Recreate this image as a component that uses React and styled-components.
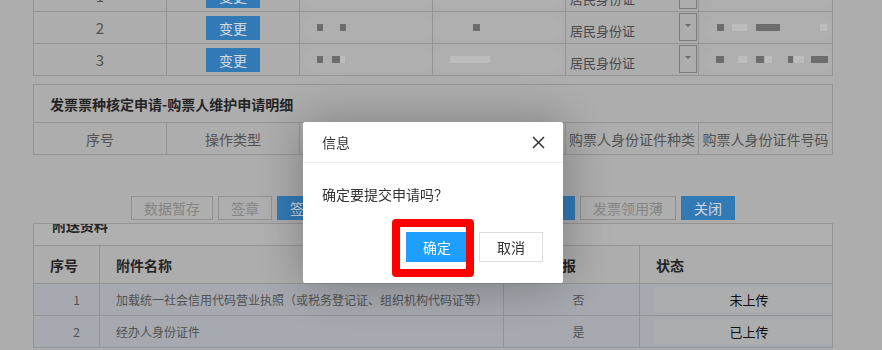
import React from "react";
import styled, { createGlobalStyle } from "styled-components";

const LINE = "#a9a9a9";
const BLUE = "#3a8bd0";
const TEXT = "#5e5e5e";

const GlobalStyle = createGlobalStyle`
  html, body {
    margin: 0;
    padding: 0;
  }
  body {
    background: #c5c5c5;
    font-family: "Noto Sans CJK SC", "Microsoft YaHei", sans-serif;
    overflow: hidden;
  }
`;

const Page = styled.div`
  width: 800px;
  height: 350px;
  margin-left: 33px;
  overflow: hidden;
`;

/* ---------- top table (scrolled) ---------- */
const TopTable = styled.div`
  margin-top: -20px;
  display: grid;
  grid-template-columns: repeat(6, 1fr);
  border-left: 1px solid ${LINE};
  border-right: 1px solid ${LINE};
`;

const Cell = styled.div`
  height: 32px;
  box-sizing: border-box;
  border-bottom: 1px solid ${LINE};
  border-right: ${(p) => (p.$last ? "none" : `1px solid ${LINE}`)};
  display: flex;
  align-items: center;
  justify-content: ${(p) => (p.$center ? "center" : "flex-start")};
  color: ${TEXT};
  font-size: 15px;
  overflow: hidden;
`;

const EditButton = styled.button`
  width: 54px;
  height: 24px;
  border: none;
  padding: 0;
  background: ${BLUE};
  color: #f2f6fb;
  font-family: inherit;
  font-size: 14px;
`;

const Blob = styled.div`
  flex: 1;
  height: 24px;
  margin: 0 ${(p) => p.$mr || 0}px 0 ${(p) => p.$ml || 0}px;
  border-radius: 12px;
  background: #c8c8c8;
  display: flex;
  align-items: center;
`;

const Mark = styled.span`
  flex: none;
  width: ${(p) => p.$w}px;
  height: 7px;
  margin-left: ${(p) => p.$gap}px;
  background: ${(p) => (p.$dark ? "#7d7d7d" : "#d8d8d8")};
`;

const SelectBox = styled.div`
  flex: 1;
  align-self: stretch;
  display: flex;
  align-items: stretch;
  padding: 1px 1px 2px 4px;
`;

const SelectText = styled.span`
  flex: 1;
  padding-top: 8px;
  font-size: 13px;
  color: #545454;
`;

const ArrowBox = styled.span`
  width: 16px;
  border: 1px solid #8e8e8e;
  display: flex;
  align-items: center;
  justify-content: center;
  &::after {
    content: "";
    border-left: 3px solid transparent;
    border-right: 3px solid transparent;
    border-top: 3px solid #7a7a7a;
    margin-top: -4px;
  }
`;

const topRows = [
  { no: 1, a: [], b: [], c: [] },
  {
    no: 2,
    a: [
      [14, 6, 1],
      [17, 6, 1],
    ],
    b: [[40, 7, 1]],
    c: [
      [10, 7, 1],
      [8, 15, 0],
      [9, 24, 1],
      [40, 7, 0],
    ],
  },
  {
    no: 3,
    a: [
      [14, 6, 1],
      [9, 8, 1],
      [0, 5, 0],
    ],
    b: [[17, 40, 0]],
    c: [
      [9, 8, 1],
      [14, 9, 0],
      [9, 8, 1],
      [1, 7, 0],
      [16, 5, 1],
      [1, 10, 0],
      [7, 17, 1],
    ],
  },
];

function Redacted({ marks, ml, mr }) {
  return (
    <Blob $ml={ml} $mr={mr}>
      {marks.map(([gap, w, dark], i) => (
        <Mark key={i} $gap={gap} $w={w} $dark={dark} />
      ))}
    </Blob>
  );
}

/* ---------- detail section ---------- */
const Section = styled.div`
  margin-top: 8px;
  border: 1px solid ${LINE};
  border-bottom: none;
`;

const SectionTitle = styled.div`
  height: 37px;
  border-bottom: 1px solid ${LINE};
  display: flex;
  align-items: center;
  padding-left: 16px;
  font-size: 14px;
  font-weight: bold;
  color: #2b2b2b;
`;

const HeadRow = styled.div`
  display: grid;
  grid-template-columns: repeat(6, 1fr);
`;

const HeadCell = styled(Cell)`
  font-size: 14px;
  color: ${TEXT};
`;

/* ---------- button bar ---------- */
const ButtonBar = styled.div`
  margin-top: 41px;
  display: flex;
  justify-content: center;
  gap: 5px;
`;

const BarButton = styled.button`
  height: 24px;
  padding: 0 12px;
  font-family: inherit;
  font-size: 14px;
  border: 1px solid ${(p) => (p.$primary ? BLUE : "#a6a6a6")};
  background: ${(p) => (p.$primary ? BLUE : "#c7c7c7")};
  color: ${(p) => (p.$primary ? "#eef3f9" : "#979797")};
`;

const barButtons = [
  ["数据暂存", false],
  ["签章", false],
  ["签章提交", true],
  ["打印申请表", true],
  ["查看申请材料", true],
  ["发票领用薄", false],
  ["关闭", true],
];

/* ---------- attachments ---------- */
const AttachPanel = styled.div`
  margin-top: 3px;
  border: 1px solid ${LINE};
  border-bottom: none;
`;

const AttachTitle = styled.div`
  height: 21px;
  overflow: hidden;
  border-bottom: 1px solid ${LINE};
  padding-left: 18px;
  background: #c9c9c9;
`;

const AttachTitleText = styled.div`
  margin-top: -11px;
  line-height: 24px;
  font-size: 14px;
  font-weight: bold;
  color: #2b2b2b;
`;

const AttachGrid = styled.div`
  display: grid;
  grid-template-columns: 66px 404px 136px 1fr;
`;

const AttachHead = styled(Cell)`
  height: 38px;
  padding-left: 16px;
  font-size: 14px;
  font-weight: bold;
  color: #2b2b2b;
`;

const AttachCell = styled(Cell)`
  background: #bdc1c8;
  font-size: 12px;
  padding-left: ${(p) => p.$pl || 0}px;
`;

const StatusBox = styled.div`
  flex: 1;
  align-self: stretch;
  margin: 3px 0 3px 14px;
  background: #c4c5c7;
  display: flex;
  align-items: center;
  justify-content: center;
  padding-left: 12px;
  font-size: 13px;
  color: #131313;
`;

const attachRows = [
  { no: 1, name: "加载统一社会信用代码营业执照（或税务登记证、组织机构代码证等）", need: "否", state: "未上传" },
  { no: 2, name: "经办人身份证件", need: "是", state: "已上传" },
];

/* ---------- dialog ---------- */
const Shade = styled.div`
  position: fixed;
  inset: 0;
  background: rgba(0, 0, 0, 0.12);
`;

const Dialog = styled.div`
  position: fixed;
  left: 303px;
  top: 122px;
  width: 260px;
  background: #fff;
  border-radius: 2px;
  box-shadow: 1px 1px 50px rgba(0, 0, 0, 0.3);
  color: #333;
  font-size: 14px;
`;

const DialogTitle = styled.div`
  height: 40px;
  border-bottom: 1px solid #eee;
  display: flex;
  align-items: center;
  justify-content: space-between;
  padding: 0 18px 0 19px;
`;

const DialogBody = styled.div`
  padding: 20px 19px 0;
  line-height: 22px;
`;

const DialogButtons = styled.div`
  display: flex;
  justify-content: flex-end;
  gap: 11px;
  padding: 27px 20px 21px;
`;

const Highlight = styled.div`
  position: relative;
  display: flex;
  &::before {
    content: "";
    position: absolute;
    left: -14px;
    top: -13px;
    right: -6px;
    bottom: -15px;
    border: 8px solid #ff0000;
    border-radius: 4px;
  }
`;

const DialogButton = styled.button`
  height: 30px;
  padding: 0 ${(p) => (p.$primary ? 16 : 17)}px;
  font-family: inherit;
  font-size: 14px;
  border: 1px solid ${(p) => (p.$primary ? "#1e9fff" : "#dedede")};
  background: ${(p) => (p.$primary ? "#1e9fff" : "#fff")};
  color: ${(p) => (p.$primary ? "#fff" : "#333")};
`;

function CloseIcon() {
  return (
    <svg width="13" height="13" viewBox="0 0 13 13">
      <path d="M1 1L12 12M12 1L1 12" stroke="#333" strokeWidth="1.5" />
    </svg>
  );
}

export default function App() {
  return (
    <>
      <GlobalStyle />
      <Page>
        <TopTable>
          {topRows.map((r) => (
            <React.Fragment key={r.no}>
              <Cell $center>{r.no}</Cell>
              <Cell $center>
                <EditButton type="button">变更</EditButton>
              </Cell>
              <Cell>
                <Redacted marks={r.a} ml={3} />
              </Cell>
              <Cell>
                <Redacted marks={r.b} mr={3} />
              </Cell>
              <Cell>
                <SelectBox>
                  <SelectText>居民身份证</SelectText>
                  <ArrowBox />
                </SelectBox>
              </Cell>
              <Cell $last>
                <Redacted marks={r.c} ml={8} />
              </Cell>
            </React.Fragment>
          ))}
        </TopTable>

        <Section>
          <SectionTitle>发票票种核定申请-购票人维护申请明细</SectionTitle>
          <HeadRow>
            {["序号", "操作类型", "购票人名称", "购票人电话", "购票人身份证件种类", "购票人身份证件号码"].map(
              (t, i) => (
                <HeadCell key={t} $center $last={i === 5}>
                  {t}
                </HeadCell>
              )
            )}
          </HeadRow>
        </Section>

        <ButtonBar>
          {barButtons.map(([t, primary]) => (
            <BarButton key={t} type="button" $primary={primary}>
              {t}
            </BarButton>
          ))}
        </ButtonBar>

        <AttachPanel>
          <AttachTitle>
            <AttachTitleText>附送资料</AttachTitleText>
          </AttachTitle>
          <AttachGrid>
            <AttachHead>序号</AttachHead>
            <AttachHead>附件名称</AttachHead>
            <AttachHead>是否必报</AttachHead>
            <AttachHead $last>状态</AttachHead>
            {attachRows.map((r) => (
              <React.Fragment key={r.no}>
                <AttachCell $center $pl={20}>
                  {r.no}
                </AttachCell>
                <AttachCell $pl={16}>{r.name}</AttachCell>
                <AttachCell $center $pl={14}>
                  {r.need}
                </AttachCell>
                <AttachCell $last>
                  <StatusBox>{r.state}</StatusBox>
                </AttachCell>
              </React.Fragment>
            ))}
          </AttachGrid>
        </AttachPanel>
      </Page>

      <Shade />
      <Dialog>
        <DialogTitle>
          <span>信息</span>
          <CloseIcon />
        </DialogTitle>
        <DialogBody>确定要提交申请吗？</DialogBody>
        <DialogButtons>
          <Highlight>
            <DialogButton type="button" $primary>
              确定
            </DialogButton>
          </Highlight>
          <DialogButton type="button">取消</DialogButton>
        </DialogButtons>
      </Dialog>
    </>
  );
}
